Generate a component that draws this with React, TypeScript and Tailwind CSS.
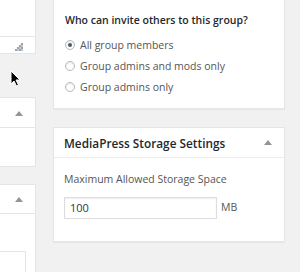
import React from "react";

const Tri = () => (
  <svg width="8" height="5" viewBox="0 0 8 5" className="block">
    <path d="M0 5 L4 0 L8 5 Z" fill="#8f959b" />
  </svg>
);

const Radio = ({ checked, label }: { checked?: boolean; label: string }) => (
  <div className="flex items-center h-[21px]">
    <span className="w-[10px] h-[10px] rounded-full border border-[#b4b9be] bg-white flex items-center justify-center shadow-[inset_0_1px_2px_rgba(0,0,0,0.1)]">
      {checked && <span className="w-[4px] h-[4px] rounded-full bg-[#4a5866]" />}
    </span>
    <span className="ml-[5px] text-[10.5px] leading-[14px] text-[#555]">{label}</span>
  </div>
);

export default function App() {
  return (
    <div
      className="relative w-[300px] h-[272px] bg-[#f1f1f1] overflow-hidden flex"
      style={{ fontFamily: '"Open Sans", "Liberation Sans", sans-serif' }}
    >
      {/* left column */}
      <div className="w-[36px] shrink-0 flex flex-col">
        <div className="h-[54px] bg-white border-r border-b border-[#e5e5e5] flex flex-col">
          <div className="h-[37px] border-b border-[#e5e5e5] shrink-0" />
          <div className="flex-1 relative">
            <svg className="absolute left-[15px] top-[6px]" width="8" height="8" viewBox="0 0 8 8">
              <rect x="6" y="0" width="2" height="2" fill="#9aa3ab" />
              <rect x="4" y="2" width="2" height="2" fill="#9aa3ab" />
              <rect x="6" y="2" width="2" height="2" fill="#c3c8cd" />
              <rect x="2" y="4" width="2" height="2" fill="#9aa3ab" />
              <rect x="4" y="4" width="2" height="2" fill="#c3c8cd" />
              <rect x="6" y="4" width="2" height="2" fill="#9aa3ab" />
              <rect x="0" y="6" width="2" height="2" fill="#9aa3ab" />
              <rect x="2" y="6" width="2" height="2" fill="#c3c8cd" />
              <rect x="4" y="6" width="2" height="2" fill="#9aa3ab" />
              <rect x="6" y="6" width="2" height="2" fill="#c3c8cd" />
            </svg>
          </div>
        </div>
        <div className="mt-[43px] h-[70px] bg-white border-r border-t border-b border-[#e5e5e5] flex flex-col">
          <div className="h-[30px] border-b border-[#e5e5e5] flex items-center justify-end pr-[12px] pt-[1px]">
            <Tri />
          </div>
        </div>
        <div className="mt-[17px] flex-1 bg-white border-r border-t border-[#e5e5e5] flex flex-col">
          <div className="h-[29px] border-b border-[#e5e5e5] flex items-center justify-end pr-[12px]">
            <Tri />
          </div>
          <div className="mt-[37px] flex-1 w-[26px] border-t border-r border-[#e5e5e5]" />
        </div>
      </div>

      {/* right column */}
      <div className="ml-[17px] w-[232px] shrink-0 flex flex-col">
        <div className="h-[109px] bg-white border-l border-r border-b border-[#e5e5e5] shadow-[0_1px_1px_rgba(0,0,0,0.04)] px-[11px] pt-[12px]">
          <div className="text-[10.5px] font-semibold text-[#23282d] leading-[16px]">Who can invite others to this group?</div>
          <div className="mt-[6px] flex flex-col">
            <Radio checked label="All group members" />
            <Radio label="Group admins and mods only" />
            <Radio label="Group admins only" />
          </div>
        </div>
        <div className="mt-[18px] h-[115px] bg-white border border-[#e5e5e5] shadow-[0_1px_1px_rgba(0,0,0,0.04)] flex flex-col">
          <div className="h-[30px] border-b border-[#eeeeee] flex items-center justify-between pl-[10px] pr-[12px]">
            <span className="text-[11.8px] font-semibold text-[#23282d] leading-[16px]">MediaPress Storage Settings</span>
            <Tri />
          </div>
          <div className="px-[10px] pt-[14px]">
            <div className="text-[10.5px] text-[#555] leading-[14px]">Maximum Allowed Storage Space</div>
            <div className="mt-[11px] flex items-center">
              <div className="w-[153px] h-[22px] border border-[#ddd] shadow-[inset_0_1px_2px_rgba(0,0,0,0.07)] flex items-center pl-[5px] text-[11px] text-[#32373c]">
                100
              </div>
              <span className="ml-[4px] text-[10.5px] text-[#555]">MB</span>
            </div>
          </div>
        </div>
      </div>

      {/* cursor */}
      <svg className="absolute left-[10px] top-[70px]" width="12" height="17" viewBox="0 0 12 17">
        <path d="M1 1 L1 14 L4 11 L6.5 16 L8.5 15 L6 10 L10 10 Z" fill="#000" stroke="#fff" strokeWidth="1" strokeLinejoin="round" />
      </svg>
    </div>
  );
}
